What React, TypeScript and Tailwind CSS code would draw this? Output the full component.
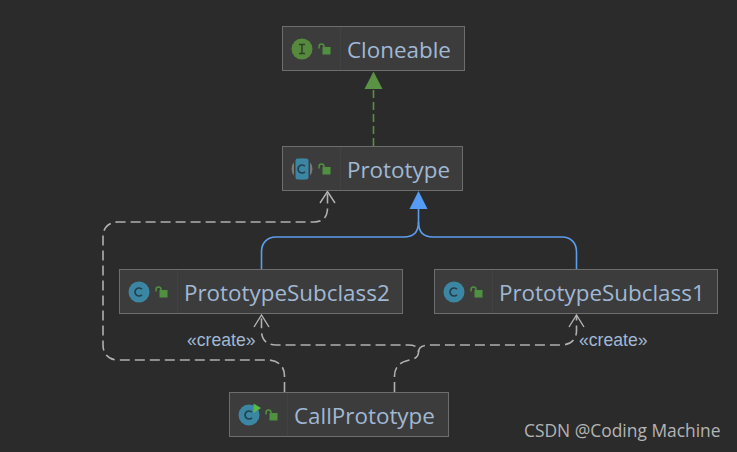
const FONT = "font-['Open_Sans','Noto_Sans',sans-serif]";

function Lock() {
  return (
    <svg width="13" height="12" viewBox="0 0 13 12" fill="none">
      <rect x="4.5" y="4" width="8" height="7.5" fill="#4f9140" />
      <path d="M1 5.5V3.8C1 0.2 6 0.2 6 3.8V4.5" stroke="#4f9140" strokeWidth="1.5" />
    </svg>
  );
}

function ClassIcon({ kind }: { kind: "interface" | "abstract" | "class" | "run" }) {
  return (
    <svg width="24" height="24" viewBox="0 0 24 24" fill="none">
      {kind === "interface" && (
        <>
          <circle cx="12" cy="12" r="10.5" fill="#558a3c" />
          <path d="M9 7.5H15M12 7.5V16.5M9 16.5H15" stroke="#2f4028" strokeWidth="1.5" />
        </>
      )}
      {kind === "abstract" && (
        <>
          <circle cx="12" cy="12" r="10.5" fill="#77797b" />
          <rect x="4" y="1.5" width="16" height="21" fill="#3c3c3c" />
          <rect x="5.5" y="1.5" width="13" height="21" rx="2" fill="#3b87a3" />
          <path d="M15 9.3A4 4 0 1 0 15 14.7" stroke="#253f4c" strokeWidth="1.7" />
        </>
      )}
      {(kind === "class" || kind === "run") && (
        <>
          <circle cx="12" cy="12" r="10.5" fill="#3b87a3" />
          <path d="M15 9.3A4 4 0 1 0 15 14.7" stroke="#253f4c" strokeWidth="1.7" />
        </>
      )}
      {kind === "run" && <path d="M16.5 0.5L24 5L16.5 10Z" fill="#58b84a" />}
    </svg>
  );
}

function Node({ className, label, kind }: { className: string; label: string; kind: "interface" | "abstract" | "class" | "run" }) {
  return (
    <div className={"absolute flex h-[45px] border border-[#6d6d6d] bg-[#3c3c3c] " + className}>
      <div className="flex w-[58px] shrink-0 items-center gap-[4px] border-r border-[#424242] pl-[7px]">
        <ClassIcon kind={kind} />
        <Lock />
      </div>
      <div className={"flex items-center pt-[4px] pl-[6px] text-[22.4px] leading-none whitespace-nowrap text-[#a0b8d4] " + FONT}>
        {label}
      </div>
    </div>
  );
}

const dashGray = { stroke: "#b0b0b0", strokeWidth: 1.6, strokeDasharray: "10 5", fill: "none" };

function Edges() {
  return (
    <svg className="absolute top-0 left-0" width="737" height="452" viewBox="0 0 737 452" fill="none">
      {/* implements */}
      <path d="M373.5 146V88" stroke="#5b8f45" strokeWidth="1.6" strokeDasharray="8 4" />
      <path d="M373.5 71.5L382.5 89H364.5Z" fill="#5b9345" />
      {/* extends */}
      <path d="M261.5 269V252C261.5 243 267 237 276 237H404C413 237 418.5 232 418.5 222V208" stroke="#5c9ded" strokeWidth="1.6" />
      <path d="M576.5 269V252C576.5 243 571 237 562 237H433C424 237 418.5 232 418.5 222" stroke="#5c9ded" strokeWidth="1.6" />
      <path d="M418.5 191L427.5 209H409.5Z" fill="#549cf5" />
      {/* create */}
      <path d="M284.5 392V376C284.5 366 278 360 268 360H118C109 360 103 354 103 345V236C103 228 109 222 118 222H314C323 222 327.5 217 327.5 208V193" {...dashGray} />
      <path d="M320 203L327.5 191.5L335 203" stroke="#b5b5b5" strokeWidth="1.4" />
      <path d="M394.5 392V376C394.5 368 399 363 406 361L413 359C417 358 418.5 355 418.5 352C418.5 347 415 345 408 345H276C267 345 261.5 340 261.5 331V315" {...dashGray} />
      <path d="M254 327L261.5 315L269 327" stroke="#b5b5b5" strokeWidth="1.4" />
      <path d="M418.5 352C418.5 347 423 345 430 345H561C570 345 576.5 340 576.5 331V315" {...dashGray} />
      <path d="M569 327L576.5 315L584 327" stroke="#b5b5b5" strokeWidth="1.4" />
    </svg>
  );
}

export default function App() {
  return (
    <div className="relative h-[452px] w-[737px] overflow-hidden bg-[#2b2b2b]">
      <Edges />
      <Node className="top-[26px] left-[282px] w-[183px]" label="Cloneable" kind="interface" />
      <Node className="top-[146px] left-[282px] w-[181px]" label="Prototype" kind="abstract" />
      <Node className="top-[269px] left-[119px] w-[284px]" label="PrototypeSubclass2" kind="class" />
      <Node className="top-[269px] left-[434px] w-[284px]" label="PrototypeSubclass1" kind="class" />
      <Node className="top-[392px] left-[229px] w-[220px]" label="CallPrototype" kind="run" />
      <span className="absolute top-[331px] left-[187px] font-['Liberation_Sans',sans-serif] text-[17.6px] leading-[18px] text-[#a0b8d4]">«create»</span>
      <span className="absolute top-[331px] left-[579px] font-['Liberation_Sans',sans-serif] text-[17.6px] leading-[18px] text-[#a0b8d4]">«create»</span>
      <span className={"absolute top-[419px] left-[524px] text-[17.4px] leading-[22px] text-[#b4b4b4] " + FONT}>CSDN @Coding Machine</span>
    </div>
  );
}
